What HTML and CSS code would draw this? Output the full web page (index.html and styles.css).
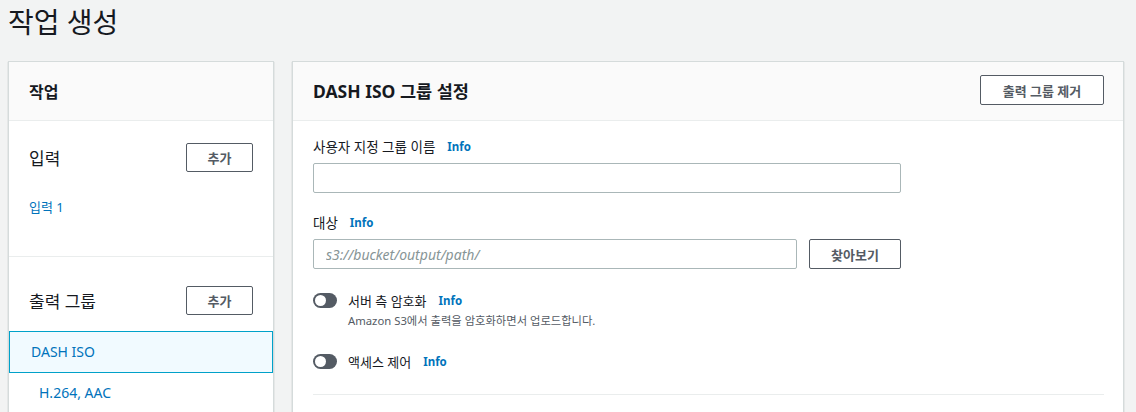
FILE: index.html
```html
<!DOCTYPE html>
<html lang="ko">
<head>
<meta charset="utf-8">
<link rel="stylesheet" href="styles.css">
</head>
<body>
<h1 class="title">작업 생성</h1>
<div class="layout">
  <aside class="panel side">
    <div class="panel-head"><h2 class="side-title">작업</h2></div>
    <div class="side-body">
      <div class="sect">
        <div class="sect-row"><span class="sect-title">입력</span><button class="btn small">추가</button></div>
        <a class="link input-link">입력 1</a>
      </div>
      <div class="sect out">
        <div class="sect-row"><span class="sect-title">출력 그룹</span><button class="btn small">추가</button></div>
      </div>
      <div class="item selected">DASH ISO</div>
      <div class="item sub">H.264, AAC</div>
    </div>
  </aside>
  <section class="panel main">
    <div class="panel-head main-head">
      <h2 class="main-title">DASH ISO 그룹 설정</h2>
      <button class="btn remove">출력 그룹 제거</button>
    </div>
    <div class="main-body">
      <div class="field">
        <div class="label">사용자 지정 그룹 이름 <a class="info">Info</a></div>
        <input class="text-input wide" type="text">
      </div>
      <div class="field">
        <div class="label">대상 <a class="info">Info</a></div>
        <div class="dest-row">
          <input class="text-input dest" type="text" placeholder="s3://bucket/output/path/">
          <button class="btn browse">찾아보기</button>
        </div>
      </div>
      <div class="toggle-row first">
        <span class="toggle"><span class="knob"></span></span>
        <div>
          <div class="toggle-label">서버 측 암호화 <a class="info">Info</a></div>
          <div class="desc">Amazon S3에서 출력을 암호화하면서 업로드합니다.</div>
        </div>
      </div>
      <div class="toggle-row second">
        <span class="toggle"><span class="knob"></span></span>
        <div class="toggle-label">액세스 제어 <a class="info">Info</a></div>
      </div>
      <div class="divider"></div>
    </div>
  </section>
</div>
</body>
</html>
```
FILE: styles.css
```css
* { box-sizing: border-box; }
html, body { margin: 0; padding: 0; }
body {
  background: #f2f3f3;
  font-family: "Noto Sans", "Noto Sans CJK KR", sans-serif;
  color: #16191f;
  width: 1136px;
  height: 412px;
  overflow: hidden;
}
.title {
  margin: 0;
  padding: 2px 0 0 8px;
  font-size: 28px;
  font-weight: 400;
  line-height: 40px;
  height: 61px;
}
.layout {
  display: flex;
  gap: 18px;
  padding-left: 8px;
}
.panel {
  background: #fff;
  border: 1px solid #d5dbdb;
  border-bottom: none;
  box-shadow: 0 1px 1px rgba(0,28,36,0.3);
  height: 360px;
}
.panel-head {
  background: #fafafa;
  border-bottom: 1px solid #eaeded;
  height: 59px;
  display: flex;
  align-items: center;
}
.side { width: 266px; }
.side-title {
  margin: 0;
  padding-left: 20px;
  font-size: 16px;
  font-weight: 700;
}
.sect { padding: 21px 20px 0 20px; }
.sect-row {
  display: flex;
  justify-content: space-between;
  align-items: center;
  height: 30px;
}
.sect-title { font-size: 17px; }
.btn {
  font-family: inherit;
  background: #fff;
  border: 1px solid #545b64;
  border-radius: 2px;
  color: #545b64;
  font-weight: 700;
  font-size: 13px;
  height: 29px;
  padding: 0;
  cursor: pointer;
}
.btn.small { width: 67px; }
.link, .info { color: #0073bb; text-decoration: none; }
.input-link {
  display: block;
  font-size: 13px;
  margin-top: 25px;
  height: 59px;
}
.out {
  border-top: 1px solid #eaeded;
  padding-top: 28px;
  height: 75px;
}
.item {
  font-size: 14px;
  color: #0073bb;
  height: 42px;
  line-height: 40px;
}
.selected {
  background: #f1faff;
  border: 1px solid #00a1c9;
  padding-left: 21px;
}
.sub { padding-left: 30px; }
.main { width: 832px; }
.main-head {
  justify-content: space-between;
  padding: 0 19px 2px 20px;
}
.main-title {
  margin: 0;
  font-size: 17.5px;
  font-weight: 700;
}
.btn.remove { width: 124px; height: 30px; }
.main-body { padding: 15px 19px 0 20px; }
.label {
  font-size: 13.5px;
  line-height: 22px;
  display: flex;
  align-items: center;
  gap: 12px;
}
.info { font-size: 11.5px; font-weight: 700; }
.text-input {
  display: block;
  font-family: inherit;
  height: 30px;
  border: 1px solid #aab7b8;
  border-radius: 2px;
  margin-top: 5px;
  padding: 0 12px;
  font-size: 14px;
}
.text-input::placeholder { color: #879596; font-style: italic; }
.wide { width: 588px; }
.field + .field { margin-top: 19px; }
.dest-row { display: flex; gap: 12px; align-items: flex-end; }
.dest { width: 484px; }
.btn.browse { width: 92px; height: 30px; }
.toggle-row { display: flex; gap: 11px; align-items: flex-start; }
.toggle-row.first { margin-top: 21px; }
.toggle-row.second { margin-top: 22px; }
.toggle {
  width: 24px;
  height: 15px;
  border-radius: 8px;
  background: #545b64;
  position: relative;
  flex: none;
  margin-top: 3px;
}
.knob {
  position: absolute;
  left: 2px;
  top: 2px;
  width: 11px;
  height: 11px;
  border-radius: 50%;
  background: #fff;
}
.toggle-label {
  font-size: 13px;
  line-height: 22px;
  display: flex;
  align-items: center;
  gap: 12px;
}
.desc { font-size: 11.3px; color: #545b64; line-height: 16px; margin-top: 1px; }
.divider { border-top: 1px solid #eaeded; margin-top: 21px; }
```
